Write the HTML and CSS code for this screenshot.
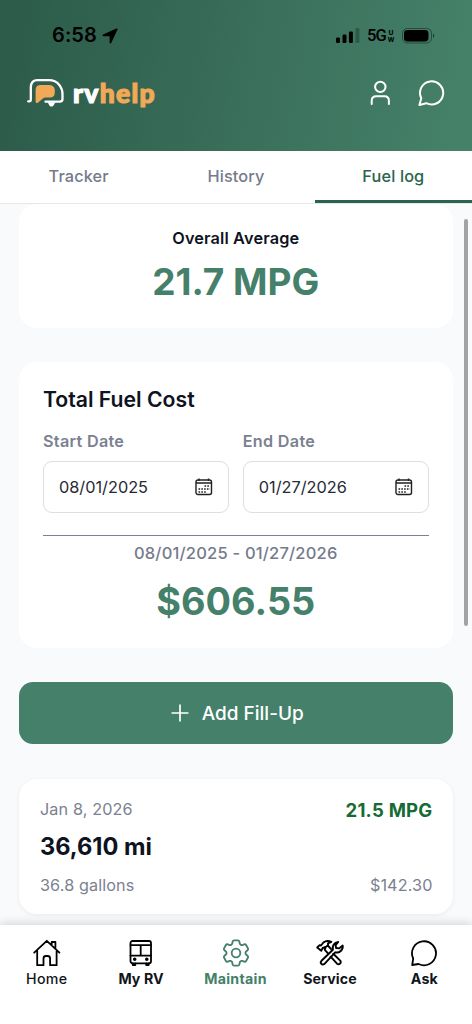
FILE: index.html
```html
<!DOCTYPE html>
<html lang="en">
<head>
<meta charset="utf-8">
<meta name="viewport" content="width=device-width, initial-scale=1">
<title>RV Help - Fuel log</title>
<link rel="stylesheet" href="styles.css">
</head>
<body>
<div class="app">
  <header class="header">
    <div class="status">
      <div class="clock"><span class="time">6:58</span>
        <svg width="16" height="16" viewBox="0 0 16 16"><path d="M14.400.6 1.100 6.500c-1 .5-.7 1.700.4 1.700h6.100v6.200c0 1.200 1.200 1.400 1.700.4L15.400 1.700c.4-.8-.2-1.400-1-1.100Z" fill="#000"/></svg>
      </div>
      <div class="signals">
        <svg class="bars" width="24" height="16" viewBox="0 0 24 16"><rect x="0" y="9.500" width="4" height="5.500" rx="1.200"/><rect x="6.500" y="6.500" width="4" height="8.500" rx="1.200"/><rect x="12.900" y="3.500" width="4" height="11.500" rx="1.200"/><rect x="19.400" y="0" width="4" height="15" rx="1.200" opacity=".25"/></svg>
        <span class="net">5G</span><span class="uw"><span>U</span><span>W</span></span>
        <svg class="battery" width="33" height="16" viewBox="0 0 33 16"><rect x=".5" y=".5" width="29" height="14.500" rx="4.800" fill="none" stroke="#000" stroke-opacity=".4"/><rect x="2" y="2" width="24.500" height="11.500" rx="3.400"/><path d="M31 5.500c1.800.7 1.800 3.800 0 4.500Z" opacity=".5"/></svg>
      </div>
    </div>
    <div class="brandbar">
      <div class="logo">
        <svg width="38" height="29" viewBox="0 0 38 29"><path d="M1.200 22.300h1q1.600 0 1.600-1.600V8.500Q3.800.9 11 1.200h11C31 1.200 35.500 8.500 35.500 15.500v4.600q0 2.600-2.600 2.600H18.500" fill="none" stroke="#fff" stroke-width="2.300" stroke-linecap="round"/><path d="M20.200 23.200c1.500 0 1.500 4.400 4.300 4.400s2.800-4.400 4.600-4.400Z" fill="#fff"/><path d="M8.600 22.600V11q0-5 5-5h8.200q6 0 6 5.500v1.700q0 5.300-5 5.300h-4q-2 0-3.200 1.300l-4.700 3.900q-1.800 1.300-2.300-1.100Z" fill="#f1a957"/></svg>
        <span class="word">rv<b>help</b></span>
      </div>
      <div class="actions">
        <svg width="21" height="26" viewBox="0 0 21 26"><circle cx="10.300" cy="6.900" r="5.200"/><path d="M1.700 24v-3.200q0-4.500 4.500-4.500h8.200q4.500 0 4.500 4.500V24"/></svg>
        <svg width="28" height="28" viewBox="0 0 28 28"><path d="M4.300 19.200a11.600 11.600 0 1 1 5 5l-6.900 1.800Z"/></svg>
      </div>
    </div>
  </header>
  <nav class="tabs">
    <a class="tab">Tracker</a><a class="tab">History</a><a class="tab active">Fuel log</a>
  </nav>
  <main class="content">
    <section class="card average">
      <h2 class="avg-title">Overall Average</h2>
      <div class="figure mpg">21.7 MPG</div>
    </section>
    <section class="card cost">
      <h1 class="cost-title">Total Fuel Cost</h1>
      <div class="dates">
        <div class="field"><label class="label">Start Date</label>
          <div class="input"><span>08/01/2025</span><svg class="cal" width="18" height="18" viewBox="0 0 18 18"><rect x="1" y="2" width="15.500" height="14.500" rx="2"/><path d="M1 5h15.500M4 .5v2.500M13.500.5v2.500"/><path class="dots" d="M9.500 8h5.500M3.500 11h11.500M3.500 14h8.500"/></svg></div>
        </div>
        <div class="field"><label class="label">End Date</label>
          <div class="input"><span>01/27/2026</span><svg class="cal" width="18" height="18" viewBox="0 0 18 18"><rect x="1" y="2" width="15.500" height="14.500" rx="2"/><path d="M1 5h15.500M4 .5v2.500M13.500.5v2.500"/><path class="dots" d="M9.500 8h5.500M3.500 11h11.500M3.500 14h8.500"/></svg></div>
        </div>
      </div>
      <div class="range">08/01/2025 - 01/27/2026</div>
      <div class="figure total">$606.55</div>
    </section>
    <button class="add"><svg width="18" height="18" viewBox="0 0 18 18"><path d="M9 1.200v15.600M1.200 9h15.600"/></svg><span>Add Fill-Up</span></button>
    <section class="card entry">
      <div class="row"><span class="date">Jan 8, 2026</span><span class="entry-mpg">21.5 MPG</span></div>
      <div class="miles">36,610 mi</div>
      <div class="row small"><span class="gallons">36.8 gallons</span><span class="price">$142.30</span></div>
    </section>
    <div class="scrollbar"></div>
  </main>
  <nav class="bottom">
    <a class="item"><svg width="30" height="28" viewBox="0 0 30 28"><path d="M2.200 13.700 14.800 1.800l12.600 11.900M5.200 12v14.200h6.300v-6.700q0-2.500 2.500-2.500h1.600q2.500 0 2.500 2.500v6.700h6.500V12M19.700 5.700V3h3.700v6.500"/></svg><span class="home">Home</span></a>
    <a class="item"><svg width="30" height="28" viewBox="0 0 30 28"><rect x="4.500" y="2" width="20.500" height="22.300" rx="2"/><path d="M4.500 6.200H25M4.500 16.600H25M14.700 6.200v10.400M6.800 24.500v1.500h2.500v-1.500M20.200 24.500v1.500h2.500v-1.500"/><circle cx="8.700" cy="20.300" r=".9" fill="#000"/><circle cx="20.800" cy="20.300" r=".9" fill="#000"/></svg><span class="myrv">My RV</span></a>
    <a class="item current"><svg width="30" height="28" viewBox="0 0 30 28"><path transform="translate(-1.920 -2.920) scale(1.410)" stroke-width="1.300" d="M9.594 3.940c.09-.542.56-.94 1.110-.94h2.593c.55 0 1.020.398 1.110.94l.213 1.281c.063.374.313.686.645.87.074.04.147.083.22.127.325.196.72.257 1.075.124l1.217-.456a1.125 1.125 0 0 1 1.370.49l1.296 2.247a1.125 1.125 0 0 1-.26 1.431l-1.003.827c-.293.241-.438.613-.43.992a7.723 7.723 0 0 1 0 .255c-.008.378.137.75.43.991l1.004.827c.424.35.534.955.26 1.430l-1.298 2.247a1.125 1.125 0 0 1-1.369.491l-1.217-.456c-.355-.133-.75-.072-1.076.124a6.470 6.470 0 0 1-.22.128c-.331.183-.581.495-.644.869l-.213 1.281c-.09.543-.56.94-1.110.94h-2.594c-.55 0-1.019-.398-1.110-.94l-.213-1.281c-.062-.374-.312-.686-.644-.87a6.520 6.520 0 0 1-.22-.127c-.325-.196-.72-.257-1.076-.124l-1.217.456a1.125 1.125 0 0 1-1.369-.49l-1.297-2.247a1.125 1.125 0 0 1 .26-1.431l1.004-.827c.292-.24.437-.613.43-.991a6.932 6.932 0 0 1 0-.255c.007-.38-.138-.751-.43-.992l-1.004-.827a1.125 1.125 0 0 1-.26-1.430l1.297-2.247a1.125 1.125 0 0 1 1.370-.491l1.216.456c.356.133.751.072 1.076-.124.072-.044.146-.086.22-.128.332-.183.582-.495.644-.869l.214-1.280Z"/><circle cx="15" cy="14" r="4.300"/></svg><span class="maintain">Maintain</span></a>
    <a class="item"><svg class="tools" width="30" height="28" viewBox="0 0 30 28"><path d="m6.500 21.800 11.400-11.100c-1-3.700 1.300-7.300 5.300-7.800l-2.600 3.300.5 2.800 2.900.4 3.700-2.800c.7 4-3.300 8-7.500 6.700L9.500 24.800c-2.400 2-5-.8-3-3Z"/><path d="m15.600 17.700 6.400 7c2.200 1.600 4.800-.8 3.200-3.100l-6.900-6.800M13 14.300 9.800 10.800l.9-2.800 2.100-1.500 3.300 3.600M10.700 8l-3 1-1.500 2.700-4-3.200 2.400-2.400 1.400.4 2.400-3Q11.600.8 16.300 2.800L13 4.300v2.200"/></svg><span class="service">Service</span></a>
    <a class="item"><svg width="30" height="28" viewBox="0 0 30 28"><path d="M4.200 19.500A12 12 0 1 1 9.600 25l-6.400 1Z"/></svg><span class="ask">Ask</span></a>
  </nav>
</div>
</body>
</html>
```

FILE: styles.css
```css
* { box-sizing: border-box; }
body { margin: 0; background: #f9fafc; font-family: Inter, sans-serif; color: #0d1321; }
svg { display: block; flex: none; }
h1, h2 { margin: 0; }
.app { width: 472px; height: 1024px; display: flex; flex-direction: column; overflow: hidden; }
.header { height: 151px; flex: none; padding: 27px 27px 0; background: linear-gradient(100deg, #2d5c4b 5%, #458069 95%); }
.status { height: 17px; display: flex; align-items: center; justify-content: space-between; padding: 0 10px 0 25px; color: #000; }
.clock { display: flex; align-items: center; gap: 5px; }
.time { font-size: 20px; font-weight: 600; line-height: 17px; letter-spacing: .1px; }
.signals { display: flex; align-items: center; }
.bars { margin-right: 7px; }
.net { font-family: Roboto, sans-serif; font-size: 16.500px; font-weight: 500; line-height: 17px; letter-spacing: -1px; width: 20px; }
.uw { display: flex; flex-direction: column; align-items: center; font-family: Roboto, sans-serif; font-size: 7.500px; font-weight: 700; line-height: 7px; width: 8px; margin-right: 7px; }
.brandbar { display: flex; justify-content: space-between; align-items: center; height: 32px; margin-top: 33px; }
.logo { display: flex; align-items: center; gap: 8px; }
.word { font-family: Lato, sans-serif; font-weight: 900; font-size: 26.500px; line-height: 32px; letter-spacing: 1.300px; color: #fff; -webkit-text-stroke: 1.200px #fff; }
.word b { font-weight: 900; color: #f1a957; -webkit-text-stroke-color: #f1a957; }
.actions { display: flex; align-items: center; gap: 26px; fill: none; stroke: #fff; stroke-width: 2; stroke-linecap: round; stroke-linejoin: round; }
.tabs { height: 53px; flex: none; display: flex; background: #fff; border-bottom: 1px solid #e5e7eb; }
.tab { flex: 1; height: 52px; display: flex; align-items: center; justify-content: center; font-size: 16.300px; font-weight: 500; letter-spacing: .15px; color: #747b8b; padding-bottom: 2px; }
.tab.active { color: #2a644c; border-bottom: 3px solid #2a644c; padding-bottom: 0; }
.content { position: relative; height: 721px; flex: none; padding: 0 19.500px 0 19px; display: flex; flex-direction: column; }
.card { background: #fff; border-radius: 18px; flex: none; }
.average { height: 124px; padding-top: 23px; text-align: center; }
.avg-title { font-size: 16.300px; font-weight: 600; line-height: 22px; letter-spacing: .15px; }
.figure { font-weight: 700; color: #45806a; text-align: center; }
.mpg { font-size: 37px; line-height: 44px; margin-top: 11px; }
.cost { height: 286px; margin-top: 34px; padding: 23px 24px 0; }
.cost-title { font-size: 21.200px; font-weight: 600; line-height: 28px; }
.dates { display: flex; gap: 14px; margin-top: 18px; }
.field { flex: 1; }
.label { display: block; font-size: 16.200px; line-height: 20px; font-weight: 600; letter-spacing: .3px; color: #7b8190; margin-bottom: 10px; }
.input { height: 52px; border: 1.500px solid #dcdee4; border-radius: 9px; display: flex; align-items: center; justify-content: space-between; padding: 0 15px; font-size: 16.300px; color: #252a35; }
.cal { fill: none; stroke: #202020; stroke-width: 1.400; }
.cal .dots { stroke-width: 1.600; stroke-dasharray: 1.600 1.200; }
.range { margin-top: 22px; border-top: 1.500px solid #7b8190; padding-top: 7px; text-align: center; font-size: 16.500px; line-height: 21px; font-weight: 500; letter-spacing: .2px; color: #747b8b; }
.total { font-size: 37.800px; line-height: 46px; margin-top: 14px; }
.add { margin-top: 34px; height: 62px; flex: none; border: 0; border-radius: 14px; background: #45806a; color: #fff; display: flex; align-items: center; justify-content: center; gap: 13px; padding: 0 0 0 3px; font: 500 19px Inter, sans-serif; }
.add svg { fill: none; stroke: #fff; stroke-width: 1.700; stroke-linecap: round; }
.entry { height: 135px; margin-top: 35px; padding: 19px 20px 0 21px; box-shadow: 0 1px 4px rgba(15,23,42,.07); }
.row { display: flex; justify-content: space-between; height: 22px; line-height: 22px; color: #7b8190; font-size: 16.200px; letter-spacing: .12px; }
.entry-mpg { color: #166b35; font-weight: 700; font-size: 18.500px; line-height: 24px; letter-spacing: .25px; }
.miles { font-size: 23.600px; font-weight: 700; line-height: 30px; margin-top: 12px; }
.small { margin-top: 12px; }
.scrollbar { position: absolute; right: 4px; top: 15px; width: 4px; height: 407px; border-radius: 2px; background: #a2a3a5; }
.bottom { position: relative; height: 99px; flex: none; display: flex; background: #fff; box-shadow: 0 -2px 9px rgba(0,0,0,.15); }
.item { flex: 1; display: flex; flex-direction: column; align-items: center; padding: 14px 1px 0 0; font-size: 14.200px; line-height: 20px; font-weight: 700; letter-spacing: .1px; color: #10151a; }
.item svg { fill: none; stroke: #000; stroke-width: 1.800; stroke-linecap: round; stroke-linejoin: round; margin-bottom: 2px; }
.home { font-weight: 500; letter-spacing: .3px; }
.maintain { letter-spacing: .3px; }
.current { color: #45806a; }
.item.current svg { stroke: #45806a; }
.item .tools { stroke-width: 1.900; }
```
